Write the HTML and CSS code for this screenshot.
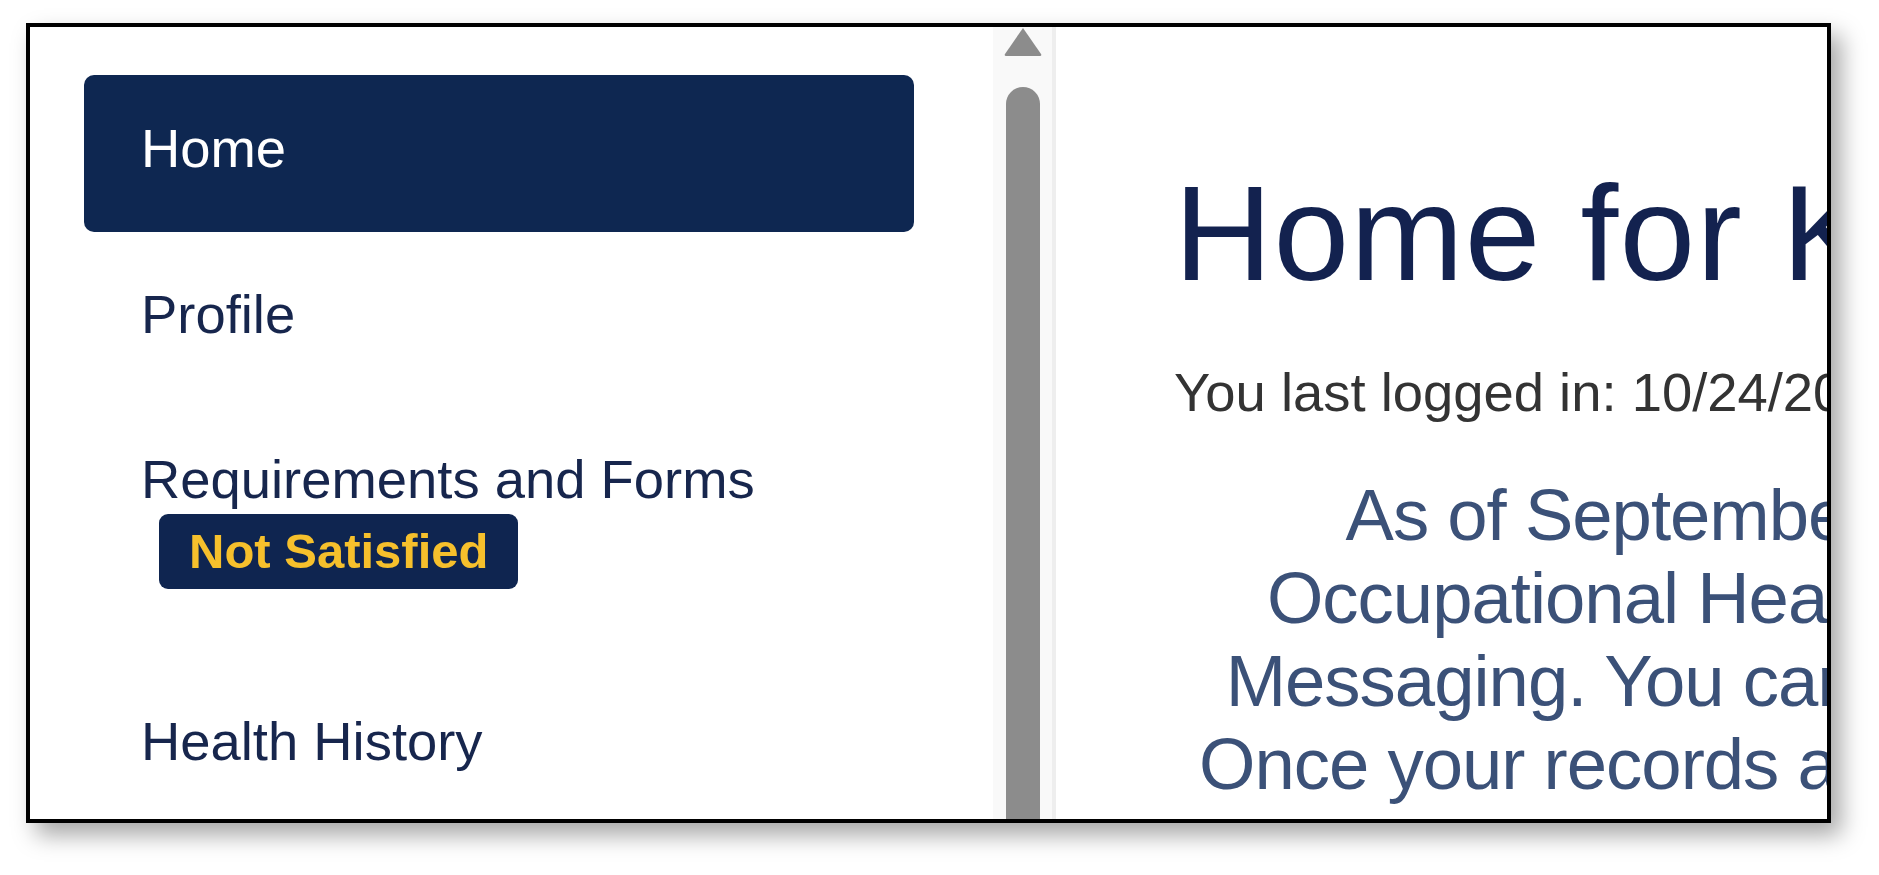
FILE: index.html
```html
<!DOCTYPE html>
<html lang="en">
<head>
<meta charset="utf-8">
<title>Home</title>
<link rel="stylesheet" href="styles.css">
</head>
<body>
<div class="page">
  <div class="frame">
    <nav class="sidebar">
      <a class="nav-item active" href="#">Home</a>
      <a class="nav-item" href="#">Profile</a>
      <a class="nav-item" href="#">Requirements and Forms<br><span class="badge">Not Satisfied</span></a>
      <a class="nav-item" href="#">Health History</a>
    </nav>
    <div class="scrollbar">
      <svg class="scroll-arrow" width="40" height="30" viewBox="0 0 40 30" aria-hidden="true">
        <path d="M20 1 L38 27 Q39 29 37 29 L3 29 Q1 29 2 27 Z" fill="#8c8c8c"/>
      </svg>
      <div class="scroll-thumb"></div>
    </div>
    <main class="content">
      <h1 class="title">Home for Kelly Smith</h1>
      <p class="last-login">You last logged in: 10/24/2023 9:15 AM</p>
      <p class="notice">As of September 15, 2023, all<br>Occupational Health joined Secure<br>Messaging. You can view them there.<br>Once your records are updated, we will<br>notify you by email.</p>
    </main>
  </div>
</div>
</body>
</html>
```

FILE: styles.css
```css
html, body {
  margin: 0;
  padding: 0;
  background: #ffffff;
}

body {
  font-family: "Liberation Sans", Arial, sans-serif;
  width: 1879px;
  height: 875px;
  overflow: hidden;
}

.page {
  padding: 23px 0 0 26px;
}

.frame {
  box-sizing: border-box;
  width: 1805px;
  height: 800px;
  border: 4px solid #000;
  background: #fff;
  display: flex;
  overflow: hidden;
  box-shadow: 10px 12px 22px rgba(0, 0, 0, 0.35);
}

.sidebar {
  flex: 0 0 963px;
  box-sizing: border-box;
  padding: 48px 79px 0 54px;
  display: flex;
  flex-direction: column;
  gap: 9px;
}

.nav-item {
  display: block;
  padding: 43px 57px 51px;
  font-size: 54.4px;
  line-height: 62.5px;
  color: #17264d;
  text-decoration: none;
  border-radius: 10px;
  white-space: nowrap;
}

.nav-item.active {
  background: #0e2751;
  color: #ffffff;
}

.badge {
  display: inline-block;
  margin: 2px 0 19px 18px;
  padding: 0 30px;
  height: 75px;
  line-height: 75px;
  font-size: 49px;
  font-weight: bold;
  color: #f6c02c;
  background: #0f2550;
  border-radius: 9px;
  vertical-align: top;
}

.scrollbar {
  flex: 0 0 59px;
  background: #f9f9f9;
  border-right: 4px solid #eeeeee;
  display: flex;
  flex-direction: column;
  align-items: center;
}

.scroll-arrow {
  display: block;
}

.scroll-thumb {
  margin-top: 30px;
  width: 34px;
  flex: 1;
  background: #8c8c8c;
  border-radius: 17px 17px 0 0;
}

.content {
  flex: 1;
  padding-left: 118px;
  overflow: hidden;
}

.title {
  margin: 128px 0 0;
  font-size: 136px;
  font-weight: normal;
  line-height: 156px;
  letter-spacing: 1.2px;
  color: #13224f;
  white-space: nowrap;
}

.last-login {
  margin: 51px 0 0;
  font-size: 54.4px;
  line-height: 62.5px;
  color: #333333;
  white-space: nowrap;
}

.notice {
  width: max-content;
  margin: 48px 0 0;
  padding: 0 25px;
  font-size: 72.5px;
  line-height: 83.3px;
  letter-spacing: -1px;
  text-align: center;
  color: #3b5178;
  white-space: nowrap;
}
```
